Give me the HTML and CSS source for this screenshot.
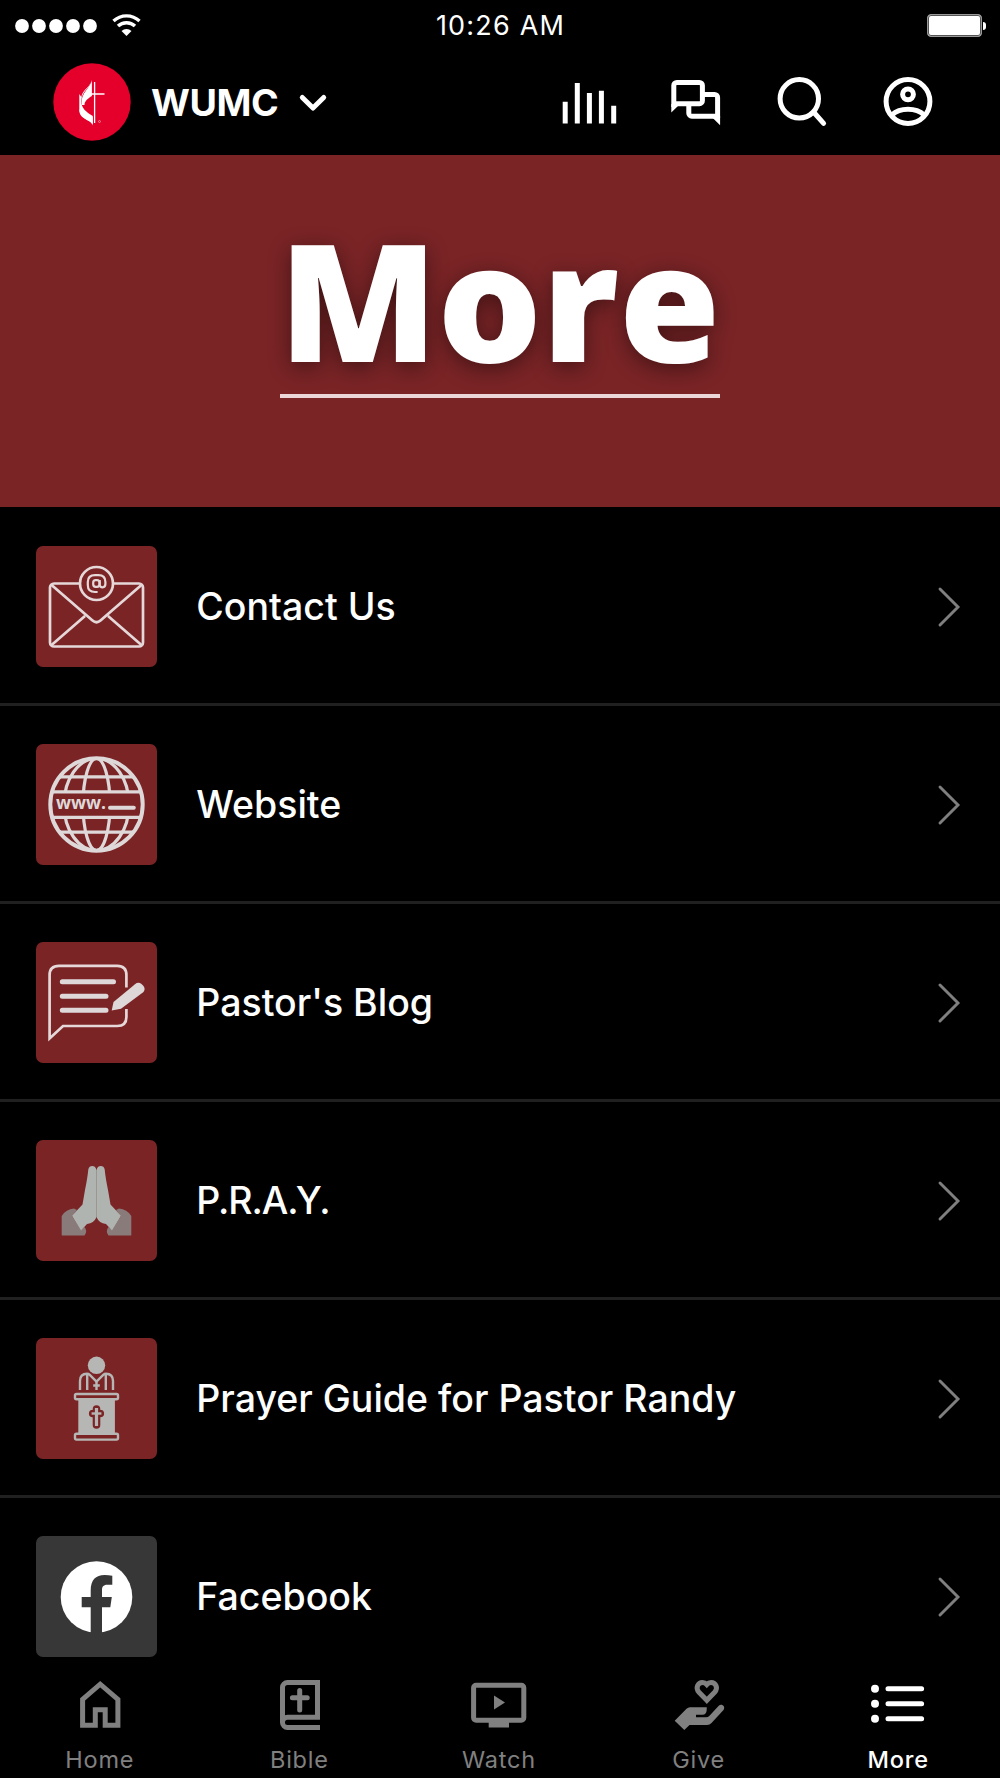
FILE: index.html
```html
<!DOCTYPE html>
<html lang="en">
  <head>
    <meta charset="UTF-8" />
    <meta name="viewport" content="width=device-width, initial-scale=1.0" />
    <title>WUMC - More</title>
    <link rel="stylesheet" href="styles.css">
  </head>
  <body>
    <div class="status-bar">
      <div class="signal">
        <svg class="dots" width="84" height="14" viewBox="0 0 84 14">
          <circle cx="7" cy="7" r="6.9" /><circle cx="24" cy="7" r="6.9" /><circle cx="41" cy="7" r="6.9" /><circle cx="58" cy="7" r="6.9" /><circle cx="75" cy="7" r="6.9" />
        </svg>
        <svg class="wifi" width="30" height="24" viewBox="0 0 30 24">
          <path class="line" d="M1.5 7 A19 19 0 0 1 27.5 7 M6 12.1 A12.3 12.3 0 0 1 23 12.1" />
          <path d="M14.5 22 L9.5 17 A7.3 7.3 0 0 1 19.5 17 Z" />
        </svg>
      </div>
      <div class="time">10:26 AM</div>
      <div class="battery"></div>
    </div>

    <header class="header">
      <svg class="logo" width="78" height="78" viewBox="0 0 78 78">
        <circle cx="39" cy="39" r="38.7" fill="#e4002b" />
        <path fill="#fff" d="M38.9 15.5 C38.5 25 28.5 27 28.3 38 C28.2 45 33 49 39.8 53 L39.8 62.5 C38 56 26.3 57 26.3 47 L26.3 31 L28.3 34 C29.5 26 38.5 24 38.9 15.5 Z" />
        <path fill="#fff" d="M38.9 17 V33 C34 36 31.5 38.5 31.5 42 L29 42 C27 30 37 26 38.9 17 Z" />
        <path fill="#fff" d="M26.3 46 C28 50 35 50 39.8 54.5 V61 C37 56 27 57 26.3 46 Z" />
        <path fill="none" stroke="#fff" stroke-width="1.3" d="M41.6 19 V60 M31 31 H51.5" />
        <circle cx="46.5" cy="58.5" r="1" fill="none" stroke="#fff" stroke-width=".4" />
      </svg>
      <div class="church-name">WUMC</div>
      <svg class="caret" width="28" height="18" viewBox="0 0 28 18">
        <path d="M3.3 3.5 L14 14 L24.7 3.5" />
      </svg>
      <div class="header-icons">
        <svg width="54" height="54" viewBox="0 0 54 54">
          <path d="M3.2 25.7 V47.4 M15.3 7 V47.4 M27.4 17 V47.4 M39.4 14.7 V47.4 M51.7 29.7 V47.4" />
        </svg>
        <svg width="54" height="54" viewBox="0 0 54 54">
          <path d="M5.8 31 V9.5 a3 3 0 0 1 3-3 H31.4 a3 3 0 0 1 3 3 V24.7 a3 3 0 0 1-3 3 H6 M36 18.5 H46.6 a3 3 0 0 1 3 3 V42 M20.8 29 V37.2 a3 3 0 0 0 3 3 H49" />
          <path class="solid" d="M3.3 28 V36.5 L10.5 29.5 Z M52.1 40 V49.2 L44.5 41.8 Z" />
        </svg>
        <svg width="54" height="54" viewBox="0 0 54 54">
          <circle cx="25.3" cy="22.8" r="19.2" />
          <path class="round" d="M40 36.5 L49.6 47.3" />
        </svg>
        <svg width="54" height="54" viewBox="0 0 54 54">
          <circle cx="28" cy="25.5" r="21.9" />
          <circle cx="28" cy="18.3" r="5.4" />
          <path d="M12 38.8 C20 31.5 36 31.5 44 38.8" />
        </svg>
      </div>
    </header>

    <div class="banner">
      <h1>More</h1>
    </div>

    <main class="list">
      <div class="row">
        <svg class="tile" viewBox="0 0 121 121">
          <path class="line" d="M43.5 37.5 H18 a4 4 0 0 0-4 4 V96.5 a4 4 0 0 0 4 4 H103 a4 4 0 0 0 4-4 V41.5 a4 4 0 0 0-4-4 H77" />
          <path class="line" d="M15 38.5 L56.5 74.5 Q60.5 78 64.5 74.5 L106 38.5 M15 99.5 L49 70 M106 99.5 L72 70" />
          <circle class="line" cx="60.5" cy="37.5" r="16.5" />
          <rect class="line at" x="57.2" y="34.2" width="6.3" height="6.6" rx="2.5" />
          <path class="line at" d="M63.7 34 V38.5 Q63.8 41.4 66.6 41.3 Q69.4 41.2 69.4 38 V36 Q69.4 29.2 62.5 29.2 H59 Q51.8 29.2 51.8 36 V39 Q51.8 46 59 46 H61.6" />
        </svg>
        <div class="label">Contact Us</div>
        <svg class="arrow" viewBox="0 0 22 40"><path d="M2 2 L20 20 L2 38" /></svg>
      </div>

      <div class="row">
        <svg class="tile" viewBox="0 0 121 121">
          <ellipse class="globe" cx="60.5" cy="60.5" rx="13.5" ry="46" />
          <ellipse class="globe" cx="60.5" cy="60.5" rx="32.5" ry="46" />
          <path class="globe" d="M24 32.8 H97 M24 88.2 H97" />
          <rect x="16" y="48" width="89" height="25.5" fill="#7a2426" />
          <path class="globe" d="M16 47.8 H105 M16 73.3 H105" />
          <circle class="globe big" cx="60.5" cy="60.5" r="46.2" />
          <text class="www" x="20" y="64.5" textLength="50" lengthAdjust="spacingAndGlyphs">www.</text>
          <path class="globe round" d="M74 63.8 H97.8" />
        </svg>
        <div class="label">Website</div>
        <svg class="arrow" viewBox="0 0 22 40"><path d="M2 2 L20 20 L2 38" /></svg>
      </div>

      <div class="row">
        <svg class="tile" viewBox="0 0 121 121">
          <path class="line" d="M90.4 45.5 V33 Q90.4 23.8 81.2 23.8 H23 Q13.6 23.8 13.6 33 V96.5 L27 84 H81.2 Q90.4 84 90.4 75 V67" />
          <path class="text-line" d="M26.3 39.8 H77.5 M26.3 54.3 H70 M26.3 68.2 H70" />
          <path class="pencil" d="M75.7 68.5 L77.5 60 L99 42.2 Q102.3 39.5 105.5 42 Q110.5 46 107.5 50 L85 66.8 Z" />
        </svg>
        <div class="label">Pastor's Blog</div>
        <svg class="arrow" viewBox="0 0 22 40"><path d="M2 2 L20 20 L2 38" /></svg>
      </div>

      <div class="row">
        <svg class="tile" viewBox="0 0 121 121">
          <g id="hand">
            <path fill="#8a7b7b" d="M25.7 95.4 V76 Q30 69 38 68.5 L41 70 L36 76 L45 90 L48.5 87 Q52 91.5 48.5 95.4 Z" />
            <path fill="#b0b4b1" d="M60.3 77.5 V29.5 C59.5 25 53 24.8 52.3 29.5 Q51.5 38 49 50 L46.5 64.5 L36 75.8 L45 90.5 L51 84 Q58 83 60.3 77.5 Z" />
          </g>
          <use href="#hand" transform="translate(121 0) scale(-1 1)" />
          <path stroke="#9da19e" stroke-width=".8" d="M60.5 30 V77" />
        </svg>
        <div class="label tight">P.R.A.Y.</div>
        <svg class="arrow" viewBox="0 0 22 40"><path d="M2 2 L20 20 L2 38" /></svg>
      </div>

      <div class="row">
        <svg class="tile podium" viewBox="0 0 121 121">
          <circle class="fill" cx="60.5" cy="27.3" r="8.7" />
          <path d="M44 52 V43 Q44 35.7 51 35.7 Q52.5 35.7 53.5 36.7 L60.5 43.5 L67.5 36.7 Q68.5 35.7 70 35.7 Q77 35.7 77 43 V52 M51.2 36.5 V52 M69.8 36.5 V52" />
          <path d="M60.5 42 V52 M57.2 47.5 H63.8" />
          <rect class="fill" x="42.3" y="60" width="36.6" height="36" />
          <rect class="slab" x="39" y="56" width="43" height="5.2" rx="1.5" />
          <rect class="slab" x="39" y="95.8" width="43" height="5.8" rx="1.5" />
          <path class="cross-edge" d="M60.5 71 V87 M56.7 75.5 H64.3" />
          <path d="M60.5 70 V88" stroke-width="3.2" />
          <path d="M55.6 75.5 H65.4" />
        </svg>
        <div class="label">Prayer Guide for Pastor Randy</div>
        <svg class="arrow" viewBox="0 0 22 40"><path d="M2 2 L20 20 L2 38" /></svg>
      </div>

      <div class="row">
        <svg class="tile dark" viewBox="0 0 121 121">
          <circle cx="60.5" cy="61" r="35.8" fill="#fff" />
          <path fill="#373737" d="M54.7 98 V71.3 H45.7 V61 H54.7 V54.5 C54.7 44 59.5 39 68.7 39 Q72.5 39 76.3 39.7 V48.7 H71.5 C67 48.7 66 51 66 54.2 V61 H75.8 L74.3 71.3 H66 V98 Z" />
        </svg>
        <div class="label">Facebook</div>
        <svg class="arrow" viewBox="0 0 22 40"><path d="M2 2 L20 20 L2 38" /></svg>
      </div>
    </main>

    <nav class="tabs">
      <div class="tab">
        <svg width="54" height="54" viewBox="0 0 54 54">
          <path d="M9.6 48.3 V22.3 L27.2 7.2 L44.9 22.3 V48.3 H32.2 V32.8 H22.3 V48.3 Z" />
        </svg>
        <span>Home</span>
      </div>
      <div class="tab">
        <svg width="54" height="54" viewBox="0 0 54 54">
          <path d="M48 50.4 H15.5 a5 5 0 0 1-5-5 V10.5 a5 5 0 0 1 5-5 H45.5 V40.3 H15.5 a5 5 0 0 0-5 5" />
          <path class="round" d="M27.7 13.4 V33 M20.4 20.7 H35.2" />
        </svg>
        <span>Bible</span>
      </div>
      <div class="tab">
        <svg width="54" height="54" viewBox="0 0 54 54">
          <rect x="1.6" y="8.2" width="50.2" height="35" rx="2.5" />
          <path class="solid" d="M16.7 44 H37 V50.5 H16.7 Z M22 18.5 L33 25.5 L22 32.5 Z" />
        </svg>
        <span>Watch</span>
      </div>
      <div class="tab">
        <svg width="54" height="54" viewBox="0 0 54 54">
          <path d="M34.8 23.3 L27 15.3 C23 11 26 5.5 30.5 5.5 Q33 5.5 34.8 7.5 Q36.6 5.5 39.1 5.5 C43.6 5.5 46.6 11 42.6 15.3 Z" />
          <path class="solid" d="M2.7 43.7 L14.5 31.8 Q16 30.3 18 30.3 H34.8 Q35 37.8 31 37.8 H24 V40.2 H34 Q36 40.2 37.5 38.7 L46.5 29 C49.5 26 54 29.5 51.5 33 L39.5 46 Q37.8 48 35 48 H17.5 L12.3 53 Z" />
        </svg>
        <span>Give</span>
      </div>
      <div class="tab active">
        <svg width="54" height="54" viewBox="0 0 54 54">
          <circle class="solid" cx="4" cy="11.7" r="4" /><circle class="solid" cx="4" cy="26.7" r="4" /><circle class="solid" cx="4" cy="41.8" r="4" />
          <path class="round" d="M17 11.7 H50.6 M17 26.7 H50.6 M17 41.8 H50.6" />
        </svg>
        <span>More</span>
      </div>
    </nav>
  </body>
</html>
```

FILE: styles.css
```css
* {
  box-sizing: border-box;
}
body {
  margin: 0;
  height: 1778px;
  display: flex;
  flex-direction: column;
  overflow: hidden;
  background-color: #000;
  color: #fff;
  font-family: Inter, "Liberation Sans", sans-serif;
}
svg {
  display: block;
  flex: none;
  overflow: visible;
}

/* status bar */
.status-bar {
  height: 51px;
  padding: 0 14px 0 15px;
  display: grid;
  grid-template-columns: 1fr auto 1fr;
  align-items: center;
  flex: none;
}
.signal {
  display: flex;
  align-items: center;
  gap: 13px;
  fill: #fff;
}
.wifi .line {
  fill: none;
  stroke: #fff;
  stroke-width: 3.4;
}
.time {
  font-size: 27px;
  letter-spacing: 1.2px;
}
.battery {
  justify-self: end;
  position: relative;
  width: 55px;
  height: 23px;
  margin-right: 4px;
  border: 1px solid #999;
  border-radius: 4px;
  background-color: #fff;
  box-shadow: inset 0 0 0 1px #555;
}
.battery::after {
  content: "";
  position: absolute;
  left: 55px;
  top: 7px;
  width: 3px;
  height: 8px;
  border-radius: 0 4px 4px 0;
  background-color: #fff;
}

/* header */
.header {
  height: 104px;
  padding: 0 66px 0 53px;
  display: flex;
  align-items: center;
  flex: none;
}
.logo {
  margin-bottom: 3px;
}
.church-name {
  margin: 0 0 2px 20px;
  font-size: 37.5px;
  font-weight: 700;
  letter-spacing: -0.4px;
}
.caret {
  margin-left: 21px;
}
.header-icons {
  margin-left: auto;
  display: flex;
  gap: 52px;
}
.caret,
.header-icons svg {
  fill: none;
  stroke: #fff;
  stroke-width: 5;
}
.caret,
.round {
  stroke-linecap: round;
  stroke-linejoin: round;
}
.header-icons .solid {
  fill: #fff;
  stroke: none;
}

/* banner */
.banner {
  height: 352px;
  display: flex;
  justify-content: center;
  align-items: flex-start;
  flex: none;
  background-color: #7a2426;
}
h1 {
  width: 440px;
  height: 243px;
  margin: 0;
  border-bottom: 4px solid #ecd6d7;
  font-family: "Open Sans", sans-serif;
  font-size: 164px;
  font-weight: 800;
  line-height: 288px;
  text-indent: -1px;
  text-shadow: 0 5px 22px rgba(0, 0, 0, 0.45);
}

/* list */
.list {
  flex: 1;
  min-height: 0;
  padding-top: 1px;
  overflow: hidden;
}
.row {
  height: 198px;
  padding: 2px 40px 0 36.3px;
  display: flex;
  align-items: center;
  border-bottom: 3px solid #202020;
}
.tile {
  width: 121px;
  height: 121px;
  border-radius: 7px;
  background-color: #7a2426;
}
.tile.dark {
  background-color: #373737;
}
.label {
  margin-left: 39px;
  font-size: 37.5px;
  font-weight: 500;
}
.label.tight {
  letter-spacing: -1.1px;
}
.arrow {
  width: 22px;
  height: 40px;
  margin-left: auto;
  fill: none;
  stroke: #7f7f7f;
  stroke-width: 2.9;
  stroke-linecap: round;
}
.tile .line {
  fill: none;
  stroke: #e6d8d8;
  stroke-width: 2.7;
}
.tile .at {
  stroke-width: 2.2;
}
.globe {
  fill: none;
  stroke: #ded8d8;
  stroke-width: 3.2;
}
.globe.big,
.globe.round {
  stroke-width: 4;
}
.www {
  fill: #ded8d8;
  font-family: "Open Sans", sans-serif;
  font-size: 17.5px;
  font-weight: 700;
}
.text-line {
  stroke: #ded8d8;
  stroke-width: 5;
  stroke-linecap: round;
}
.pencil {
  fill: #ded8d8;
}
.podium {
  fill: none;
  stroke: #b6b7b4;
  stroke-width: 2.4;
}
.podium .fill {
  fill: #b6b7b4;
  stroke: none;
}
.podium .slab {
  fill: #7a2426;
}
.podium .cross-edge {
  stroke: #7a2426;
  stroke-width: 7.6;
  stroke-linecap: round;
}

/* bottom tabs */
.tabs {
  height: 114px;
  padding: 13px 2px 0 0;
  display: flex;
  flex: none;
  background-color: #000;
}
.tab {
  flex: 1;
  display: flex;
  flex-direction: column;
  align-items: center;
  color: #808080;
  font-size: 23.5px;
  letter-spacing: 0.8px;
}
.tab svg {
  fill: none;
  stroke: currentColor;
  stroke-width: 5;
}
.tab .solid {
  fill: currentColor;
  stroke: none;
}
.tab span {
  margin-top: 14px;
}
.tab.active {
  color: #fff;
}
.tab.active span {
  font-weight: 500;
}
```
